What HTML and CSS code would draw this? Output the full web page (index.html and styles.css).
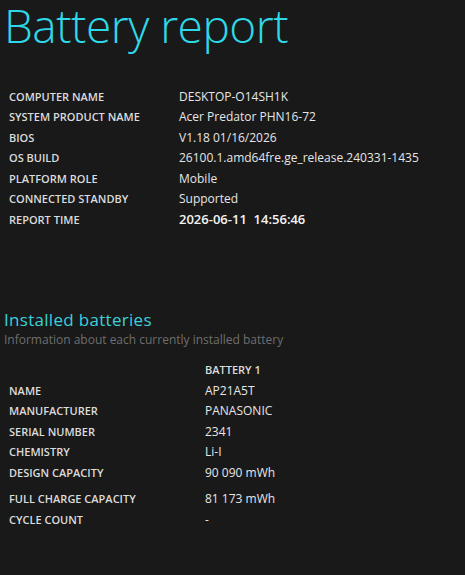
FILE: index.html
```html
<!DOCTYPE html>
<html lang="en">
<head>
    <meta charset="utf-8">
    <title>Battery report</title>
    <link rel="stylesheet" href="styles.css">
</head>
<body>
<h1 class="title">Battery report</h1>

<table class="info">
    <tr><td class="label">COMPUTER NAME</td><td>DESKTOP-O14SH1K</td></tr>
    <tr><td class="label">SYSTEM PRODUCT NAME</td><td>Acer Predator PHN16-72</td></tr>
    <tr><td class="label">BIOS</td><td>V1.18 01/16/2026</td></tr>
    <tr><td class="label">OS BUILD</td><td>26100.1.amd64fre.ge_release.240331-1435</td></tr>
    <tr><td class="label">PLATFORM ROLE</td><td>Mobile</td></tr>
    <tr><td class="label">CONNECTED STANDBY</td><td>Supported</td></tr>
    <tr><td class="label">REPORT TIME</td><td class="time">2026-06-11&nbsp;&nbsp;14:56:46</td></tr>
</table>

<h2 class="section">Installed batteries</h2>
<div class="desc">Information about each currently installed battery</div>

<table class="batteries">
    <tr><td></td><td class="head">BATTERY 1</td></tr>
    <tr><td class="label">NAME</td><td>AP21A5T</td></tr>
    <tr><td class="label">MANUFACTURER</td><td>PANASONIC</td></tr>
    <tr><td class="label">SERIAL NUMBER</td><td>2341</td></tr>
    <tr><td class="label">CHEMISTRY</td><td>Li-I</td></tr>
    <tr><td class="label">DESIGN CAPACITY</td><td>90 090 mWh</td></tr>
    <tr class="spaced"><td class="label">FULL CHARGE CAPACITY</td><td>81 173 mWh</td></tr>
    <tr><td class="label">CYCLE COUNT</td><td>-</td></tr>
</table>
</body>
</html>
```

FILE: styles.css
```css
body{
    margin: 0;
    background-color: #191919;
    color: #e6e6e6;
    font-family: "Open Sans", "Noto Sans", sans-serif;
    font-size: 12px;
}
.title{
    margin: 0;
    padding: 0 0 0 4px;
    font-size: 46px;
    font-weight: 300;
    letter-spacing: -0.5px;
    line-height: 50px;
    height: 56px;
    color: #2ed8e8;
}
table{
    border-collapse: collapse;
}
td{
    padding: 0;
    height: 20.5px;
    vertical-align: middle;
    white-space: nowrap;
}
.info{
    margin: 30px 0 0 9px;
}
.info .label{
    width: 170px;
}
.label{
    font-size: 11px;
    font-weight: 600;
    color: #dcdcdc;
}
.time{
    font-size: 13px;
    font-weight: 600;
    color: #f4f4f4;
}
.section{
    margin: 79px 0 0 4px;
    font-size: 17px;
    font-weight: 400;
    letter-spacing: 0.3px;
    line-height: 22px;
    color: #3ccfdc;
}
.desc{
    margin-left: 4px;
    color: #6e6e6e;
    line-height: 18px;
}
.batteries{
    margin: 11px 0 0 9px;
}
.batteries .label{
    width: 196px;
}
.head{
    font-size: 11px;
    font-weight: 600;
    color: #dcdcdc;
}
.spaced td{
    padding-top: 6px;
}
```
